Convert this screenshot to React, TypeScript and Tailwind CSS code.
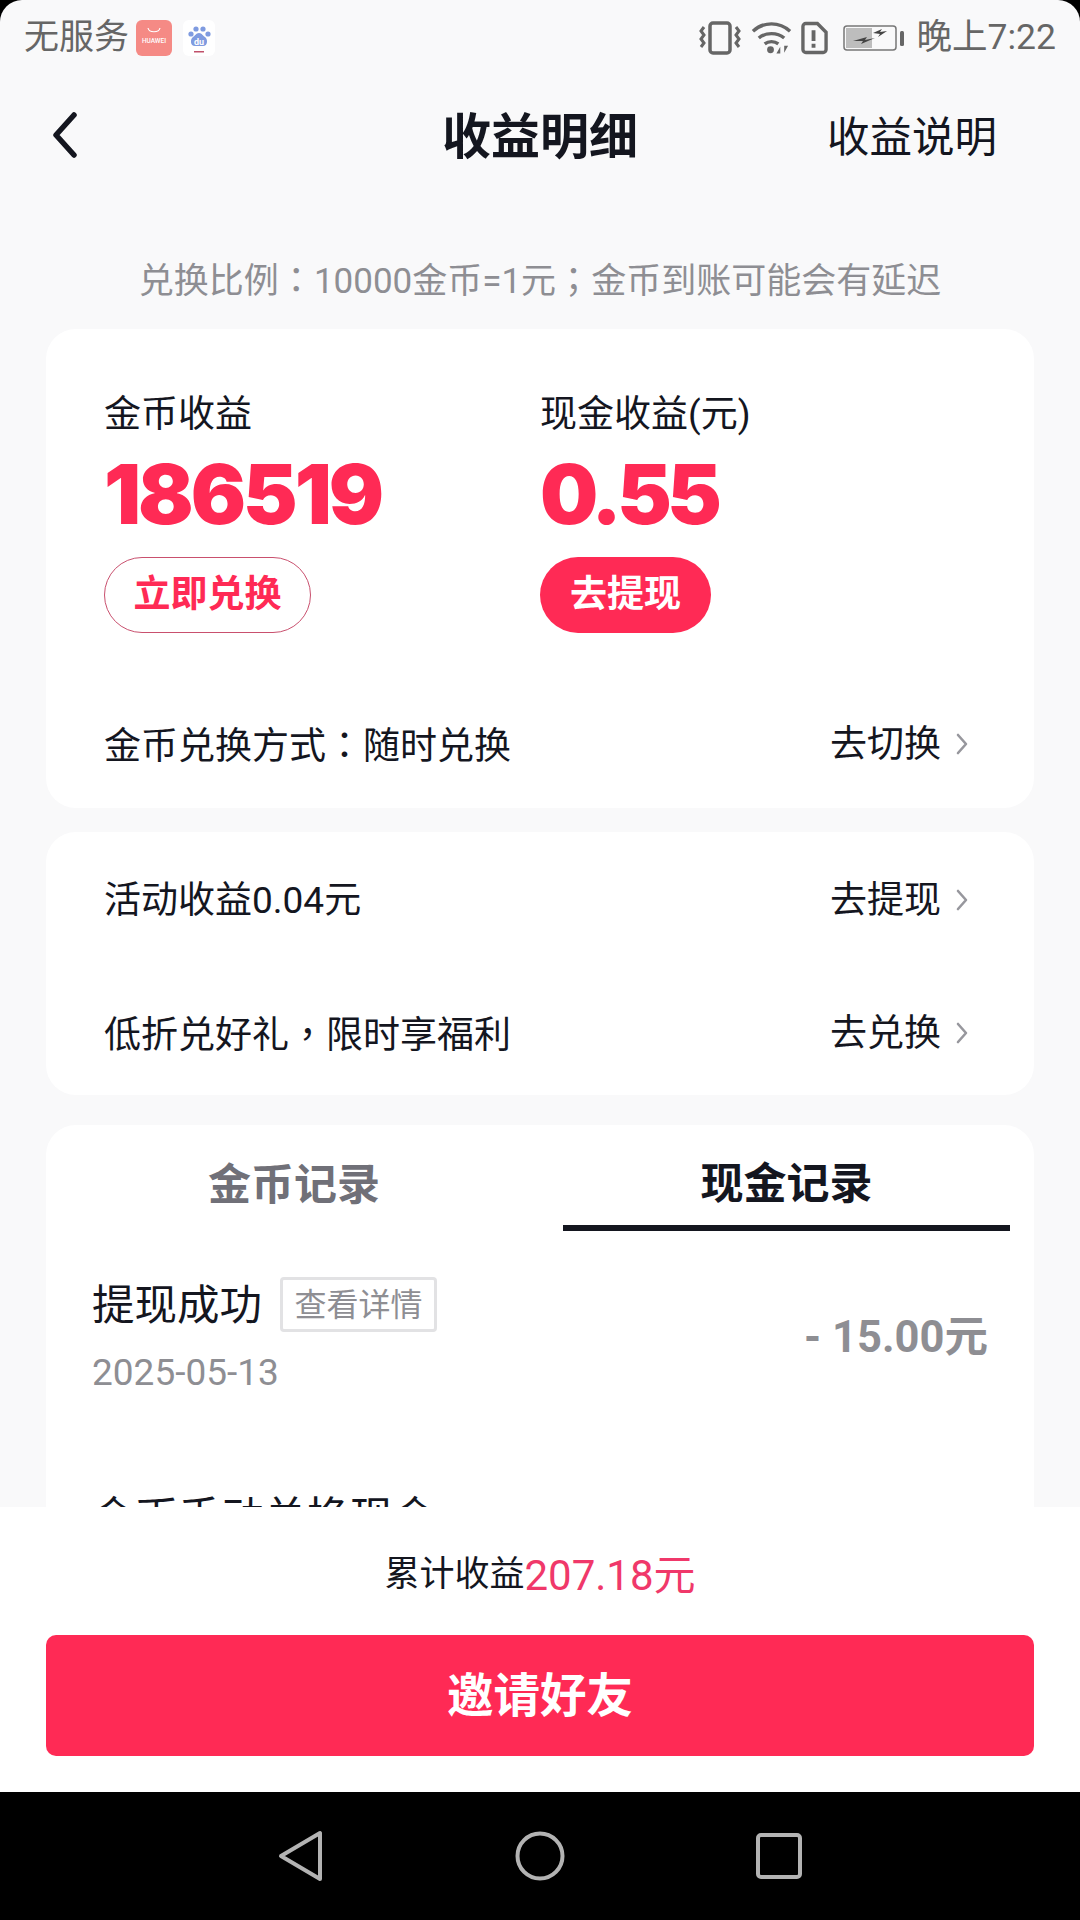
const FONT = "font-['Roboto','Noto_Sans_CJK_SC',sans-serif]"
const PUNCT = "font-['Noto_Sans_CJK_TC',sans-serif]"

const Row = ({ label, action, className }: { label: React.ReactNode; action: string; className: string }) => (
  <div className={`flex items-center justify-between h-[48px] pl-[58px] pr-[66px] ${className}`}>
    <span className="text-[37px] leading-[48px] text-[#14161f]">{label}</span>
    <span className="flex items-center gap-[15px] text-[37px] leading-[48px] text-[#14161f]">
      {action}
      <svg width="12" height="22" viewBox="0 0 12 22" fill="none" stroke="#97979d" strokeWidth="2.6" strokeLinecap="round" strokeLinejoin="round" className="mb-[3px]">
        <path d="M2 2l8 9-8 9" />
      </svg>
    </span>
  </div>
)

const StatusIcons = () => (
  <div className="flex items-center">
    <svg width="42" height="34" viewBox="0 0 42 34" fill="none" stroke="#666" strokeWidth="3">
      <rect x="11" y="2" width="20" height="30" rx="3" strokeWidth="3.5" />
      <path d="M5 6l-3 4 3 4-3 4 3 4-3 4M37 6l3 4-3 4 3 4-3 4 3 4" strokeWidth="3" />
    </svg>
    <svg className="ml-[10px]" width="41" height="34" viewBox="0 0 42 34" fill="none" stroke="#666" strokeWidth="3.5">
      <path d="M2 10c11-10 27-10 38 0M8 17c7-6 19-6 26 0M14 23c4-3 10-3 14 0" />
      <circle cx="20" cy="29" r="3.5" fill="#666" stroke="none" />
      <path d="M30 33v-7l-4 7zM34 25v7l4-7z" fill="#666" stroke="none" />
    </svg>
    <svg className="ml-[9px]" width="27" height="34" viewBox="0 0 28 34" fill="none" stroke="#666" strokeWidth="3.5">
      <path d="M5 2h12l9 9v18a3 3 0 0 1-3 3H5a3 3 0 0 1-3-3V5a3 3 0 0 1 3-3z" />
      <path d="M13 9v11M13 23v4" strokeWidth="4" />
    </svg>
    <svg className="ml-[15px]" width="62" height="30" viewBox="0 0 62 30">
      <rect x="1" y="3" width="52" height="24" rx="3" fill="none" stroke="#777" strokeWidth="1.5" />
      <rect x="3" y="5" width="26" height="20" fill="#bdbdbd" />
      <path d="M10 18l14-4-2 3 10-2-14 6 2-3zM30 10l9-4-2 3 7-1-9 6 2-3z" fill="#444" />
      <rect x="57" y="8" width="4" height="15" rx="1.5" fill="#666" />
    </svg>
  </div>
)

const HuaweiIcon = () => (
  <svg width="36" height="36" viewBox="0 0 36 36">
    <rect width="36" height="36" rx="6" fill="#f58a85" />
    <path d="M12 8c1 5 11 5 12 0" fill="none" stroke="#fff" strokeWidth="1.2" />
    <text x="18" y="23" fontSize="6.5" fill="#fff" textAnchor="middle" fontFamily="Roboto" fontWeight="500">HUAWEI</text>
  </svg>
)

const BaiduIcon = () => (
  <svg width="32" height="36" viewBox="0 0 32 36">
    <rect width="32" height="36" rx="6" fill="#fff" />
    <g fill="#7f9be0">
      <circle cx="8" cy="14" r="2.6" />
      <circle cx="13" cy="9" r="2.6" />
      <circle cx="20" cy="9" r="2.6" />
      <circle cx="25" cy="14" r="2.6" />
      <path d="M16 13c3 0 4 3 6 4 3 2 3 9-2 9h-8c-5 0-5-7-2-9 2-1 3-4 6-4z" />
    </g>
    <text x="16" y="25" fontSize="9" fill="#fff" textAnchor="middle" fontFamily="Roboto" fontWeight="700">du</text>
    <rect x="11" y="31" width="10" height="1.5" fill="#c0506a" />
  </svg>
)

export default function App() {
  return (
    <div className="bg-black w-[1080px] h-[1920px]">
      <div className={`${FONT} w-[1080px] h-[1920px] bg-[#f9f9fa] rounded-t-[22px] flex flex-col overflow-hidden`}>
        <div className="h-[72px] shrink-0 flex items-center justify-between pt-[3px] px-[24px]">
          <div className="flex items-center">
            <span className="text-[35px] leading-[69px] text-[#666]">无服务</span>
            <span className="ml-[7px]"><HuaweiIcon /></span>
            <span className="ml-[11px]"><BaiduIcon /></span>
          </div>
          <div className="flex items-center gap-[12px]">
            <StatusIcons />
            <span className="text-[35.5px] leading-[69px] text-[#666]">晚上7:22</span>
          </div>
        </div>

        <div className="h-[132px] shrink-0 flex items-center justify-between relative pl-[53px] pr-[83px]">
          <svg width="24" height="46" viewBox="0 0 24 46" fill="none" stroke="#14161f" strokeWidth="5.5" strokeLinecap="round" strokeLinejoin="round" className="mb-[6px]">
            <path d="M21 3L3 23l18 20" />
          </svg>
          <span className="text-[49px] font-bold text-[#14161f] absolute left-0 right-0 text-center">收益明细</span>
          <span className="text-[42.5px] text-[#14161f]">收益说明</span>
        </div>

        <div className="flex-1 min-h-0 overflow-hidden">
          <p className="mt-[52px] h-[44px] text-center text-[35px] leading-[44px] text-[#8e8e93]">
            兑换比例<span className={PUNCT}>：</span>10000金币=1元<span className={PUNCT}>；</span>金币到账可能会有延迟
          </p>

          <div className="mt-[29px] mx-[46px] bg-white rounded-[30px] h-[479px]">
            <div className="flex pl-[58px] pt-[64px]">
              <div className="w-[436px]">
                <div className="text-[37px] leading-[44px] text-[#14161f]">金币收益</div>
                <div className="font-['Inter'] text-[82px] leading-[88px] mt-[14px] font-black text-[#ff2a55] tracking-[-3px]">186519</div>
                <button className="mt-[18px] h-[76px] w-[207px] rounded-full border border-[#c9506e] text-[37px] font-bold text-[#ff2a55]">立即兑换</button>
              </div>
              <div>
                <div className="text-[37px] leading-[44px] text-[#14161f]">现金收益(元)</div>
                <div className="font-['Inter'] text-[82px] leading-[88px] mt-[14px] font-black text-[#ff2a55] tracking-[-4.5px]">0.55</div>
                <button className="mt-[18px] h-[76px] w-[171px] rounded-full bg-[#ff2a55] text-[37px] font-bold text-white">去提现</button>
              </div>
            </div>
            <Row className="mt-[88px]" label={<>金币兑换方式<span className={PUNCT}>：</span>随时兑换</>} action="去切换" />
          </div>

          <div className="mt-[24px] mx-[46px] bg-white rounded-[30px] h-[263px] pt-[45px]">
            <Row className="" label="活动收益0.04元" action="去提现" />
            <Row className="mt-[85px]" label={<>低折兑好礼<span className={PUNCT}>，</span>限时享福利</>} action="去兑换" />
          </div>

          <div className="mt-[30px] mx-[46px] bg-white rounded-t-[30px] h-[500px]">
            <div className="flex justify-between h-[106px] pl-[23px] pr-[24px]">
              <div className="w-[450px] flex items-center justify-center text-[43px] font-bold text-[#707078] pt-[14px]">金币记录</div>
              <div className="w-[447px] flex items-center justify-center text-[43px] font-bold text-[#14161f] border-b-[6px] border-[#14161f] pt-[18px]">现金记录</div>
            </div>
            <div className="flex items-center justify-between px-[46px] mt-[46px]">
              <div>
                <div className="flex items-center">
                  <span className="text-[42.5px] leading-[56px] text-[#14161f]">提现成功</span>
                  <span className="ml-[18px] mb-[3px] h-[55px] w-[157px] flex items-center justify-center border-[3px] border-[#e2e2e4] rounded-[4px] text-[32px] text-[#8e8e93]">查看详情</span>
                </div>
                <div className="mt-[14px] text-[37px] leading-[48px] text-[#8e8e93]">2025-05-13</div>
              </div>
              <span className="text-[43.5px] font-bold text-[#8e8e93] mt-[2px]">- 15.00元</span>
            </div>
            <div className="pl-[46px] mt-[93px] text-[43px] leading-[56px] text-[#14161f]">金币手动兑换现金</div>
          </div>
        </div>

        <div className="h-[285px] shrink-0 bg-white flex flex-col items-center relative z-10">
          <div className="mt-[40px] h-[56px] flex items-center">
            <span className="text-[35px] text-[#14161f]">累计收益</span>
            <span className="text-[42px] text-[#f0386a]">207.18元</span>
          </div>
          <button className="mt-[32px] w-[988px] h-[121px] rounded-[10px] bg-[#ff2a55] text-[46.5px] font-bold text-white pt-[3px]">邀请好友</button>
        </div>

        <div className="h-[128px] shrink-0 bg-black flex items-center justify-between px-[278px]">
          <svg width="46" height="52" viewBox="0 0 46 52" fill="none" stroke="#b3b3b3" strokeWidth="4" strokeLinejoin="round">
            <path d="M42 3v46L3 26z" />
          </svg>
          <svg width="50" height="50" viewBox="0 0 50 50" fill="none" stroke="#b3b3b3" strokeWidth="4">
            <circle cx="25" cy="25" r="22.5" />
          </svg>
          <svg width="46" height="46" viewBox="0 0 46 46" fill="none" stroke="#b3b3b3" strokeWidth="4">
            <rect x="2" y="2" width="42" height="42" rx="3" />
          </svg>
        </div>
      </div>
    </div>
  )
}
